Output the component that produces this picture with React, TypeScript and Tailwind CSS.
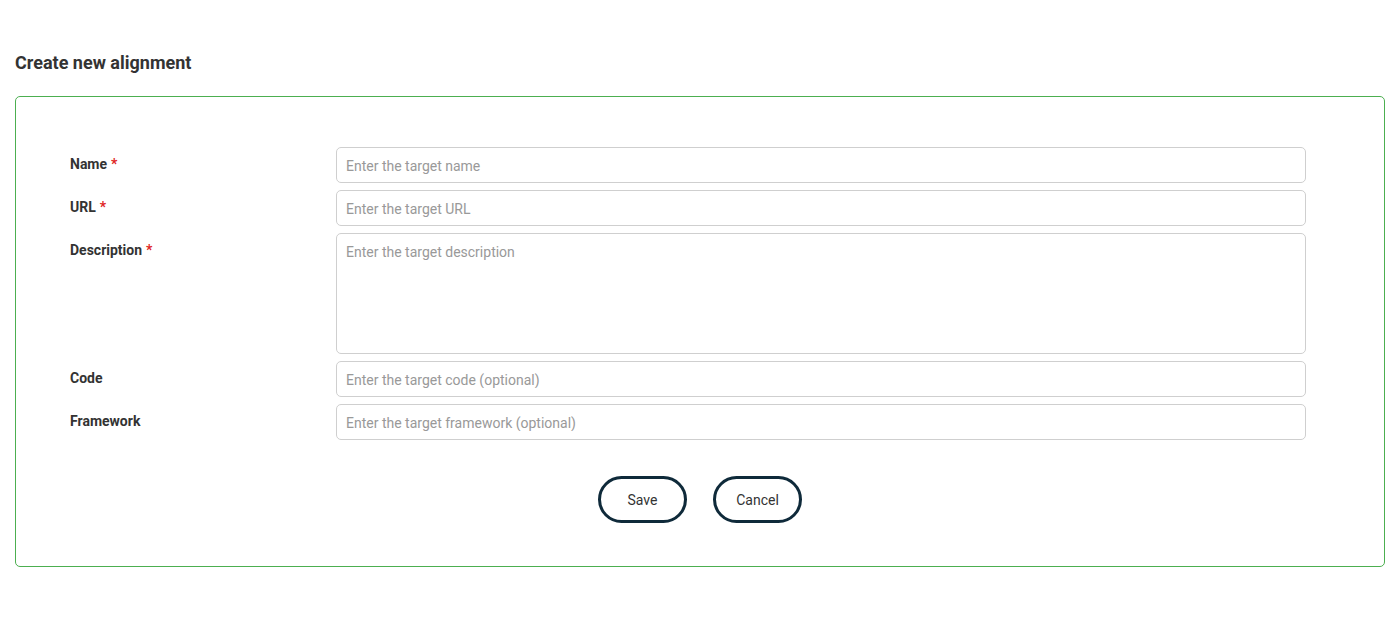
import React from "react";

const FIELDS = [
  { key: "name", label: "Name", required: true, placeholder: "Enter the target name" },
  { key: "url", label: "URL", required: true, placeholder: "Enter the target URL" },
  {
    key: "description",
    label: "Description",
    required: true,
    placeholder: "Enter the target description",
    multiline: true,
  },
  { key: "code", label: "Code", required: false, placeholder: "Enter the target code (optional)" },
  {
    key: "framework",
    label: "Framework",
    required: false,
    placeholder: "Enter the target framework (optional)",
  },
];

export default function App() {
  return (
    <div className="min-h-screen bg-white font-['Roboto',sans-serif] text-[#333]">
      <div className="px-[15px] pt-[51px]">
        <h1 className="text-[18px] font-bold leading-[24px] text-[#333]">Create new alignment</h1>

        <form
          className="mt-[21px] rounded-[5px] border border-[#4caf50] pt-[50px] pb-[43px] pl-[54px] pr-[78px]"
          onSubmit={(e) => e.preventDefault()}
        >
          <div className="flex flex-col gap-[7px]">
            {FIELDS.map((f) => (
              <div key={f.key} className="grid grid-cols-[266px_1fr]">
                <label
                  htmlFor={f.key}
                  className="pt-[8px] text-[14px] font-bold leading-[18px] text-[#333]"
                >
                  {f.label}
                  {f.required ? <span className="ml-[4px] text-[#e02424]">*</span> : null}
                </label>
                {f.multiline ? (
                  <textarea
                    id={f.key}
                    placeholder={f.placeholder}
                    className="h-[121px] w-full resize-none rounded-[5px] border border-[#cfcfcf] px-[9px] pt-[8px] pb-[8px] text-[14px] leading-[20px] text-[#333] outline-none placeholder:text-[#999]"
                  />
                ) : (
                  <input
                    id={f.key}
                    placeholder={f.placeholder}
                    className="h-[36px] w-full rounded-[5px] border border-[#cfcfcf] px-[9px] pt-[2px] text-[14px] text-[#333] outline-none placeholder:text-[#999]"
                  />
                )}
              </div>
            ))}
          </div>

          <div className="mt-[36px] flex justify-center gap-[26px] pl-[24px]">
            <button
              type="submit"
              className="h-[47px] w-[89px] rounded-full border-[3px] border-[#0f2a3a] bg-white pt-[2px] text-[14px] text-[#333]"
            >
              Save
            </button>
            <button
              type="button"
              className="h-[47px] w-[89px] rounded-full border-[3px] border-[#0f2a3a] bg-white pt-[2px] text-[14px] text-[#333]"
            >
              Cancel
            </button>
          </div>
        </form>
      </div>
    </div>
  );
}
